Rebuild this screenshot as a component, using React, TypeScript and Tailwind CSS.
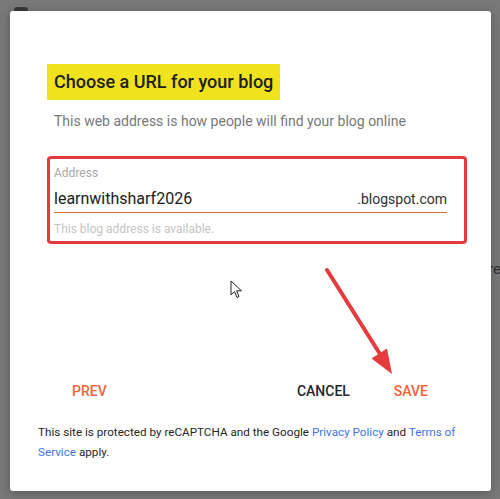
export default function App() {
  return (
    <div
      className="relative h-[499px] w-[500px] overflow-hidden bg-[#787878] px-[10px] pt-[11px]"
      style={{ fontFamily: 'Roboto, "Liberation Sans", sans-serif' }}
    >
      {/* bits of the page behind the overlay */}
      <div className="absolute left-[14px] top-[7px] h-[5px] w-[14px] rounded-t-[3px] bg-[#3a3a3a]" />
      <span className="absolute left-[488px] top-[258px] text-[15px] text-[#2e2e2e]">re</span>

      <div className="relative h-[480px] w-[481px] rounded-[3px] bg-white shadow-[0_2px_10px_rgba(0,0,0,0.25)]">
        <div className="pl-[37px] pt-[53px]">
          <div className="inline-flex h-[36px] items-center bg-[#f0e31e] px-[7px]">
            <h1 className="text-[18px] font-medium leading-none text-[#202020]">Choose a URL for your blog</h1>
          </div>
          <p className="mt-[11px] pl-[7px] text-[14px] leading-[20px] text-[#787878]">
            This web address is how people will find your blog online
          </p>

          <div className="mt-[25px] h-[88px] w-[420px] rounded-[4px] border-[3px] border-[#e53a3e] pl-[4px] pr-[17px] pt-[6px]">
            <div className="text-[12px] leading-[16px] text-[#a8a8a8]">Address</div>
            <div className="mt-[8px] flex items-baseline justify-between leading-[20px]">
              <span className="text-[16px] text-[#202020]">learnwithsharf2026</span>
              <span className="text-[14px] text-[#303030]">.blogspot.com</span>
            </div>
            <div className="mt-[3px] h-px bg-[#e0683c]" />
            <div className="mt-[8px] text-[12px] leading-[16px] text-[#c4c4c4]">This blog address is available.</div>
          </div>
        </div>

        <div className="mt-[137px] flex items-center text-[14px] font-medium leading-[20px]">
          <button className="ml-[62px] text-[#f0643a]">PREV</button>
          <button className="ml-auto text-[#262626]">CANCEL</button>
          <button className="ml-[44px] mr-[63px] text-[#f0643a]">SAVE</button>
        </div>

        <p className="mt-[21px] pl-[28px] pr-[22px] text-[11.7px] leading-[20px] text-[#262626]">
          This site is protected by reCAPTCHA and the Google{' '}
          <a className="text-[#3f74dd]">Privacy Policy</a> and{' '}
          <a className="text-[#3f74dd]">Terms of Service</a> apply.
        </p>

        {/* annotation arrow */}
        <svg className="absolute left-[300px] top-[250px]" width="100" height="130" viewBox="0 0 100 130">
          <line x1="17" y1="9" x2="70" y2="93" stroke="#e53a3e" strokeWidth="4" strokeLinecap="round" />
          <polygon points="82,113 77,87.5 61.5,97.5" fill="#e53a3e" />
        </svg>

        {/* mouse cursor */}
        <svg className="absolute left-[220px] top-[269px]" width="14" height="20" viewBox="0 0 14 20">
          <path d="M1 1 L1 15 L4.5 11.5 L7 17.5 L9 16.6 L6.6 10.8 L11.5 10.8 Z" fill="white" stroke="#222" strokeWidth="1" strokeLinejoin="round" />
        </svg>
      </div>
    </div>
  );
}
